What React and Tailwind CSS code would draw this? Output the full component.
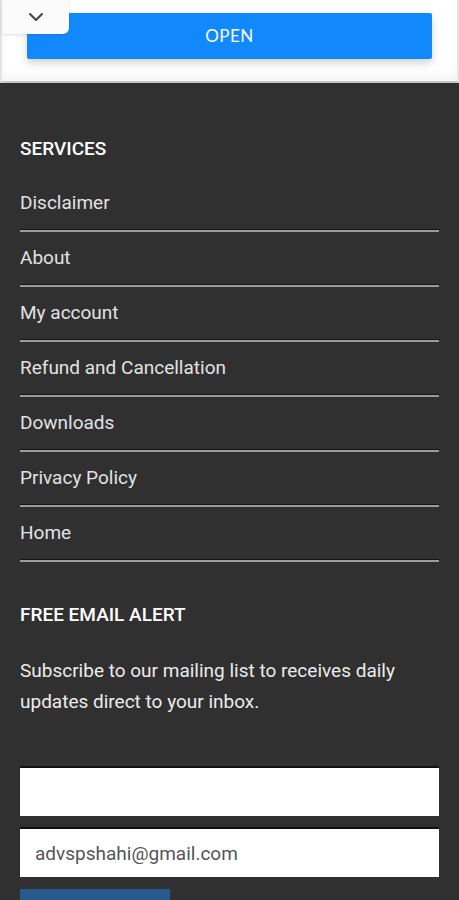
import React from "react";

const services = [
  "Disclaimer",
  "About",
  "My account",
  "Refund and Cancellation",
  "Downloads",
  "Privacy Policy",
  "Home",
];

const App = () => {
  return (
    <div
      className="w-[459px] h-[900px] overflow-hidden bg-[#303030]"
      style={{ fontFamily: "Roboto, 'Liberation Sans', sans-serif" }}
    >
      {/* Top bar with open button */}
      <div className="relative h-[83px] bg-white border-x-2 border-x-[#e4e4e4] border-b-2 border-b-[#c8c8c8] shadow-[inset_0_-6px_8px_rgba(0,0,0,0.04)]">
        <div className="pt-[13px] pl-[25px] pr-[25px]">
          <button
            className="w-full h-[46px] bg-[#1189fd] rounded-[2px] text-white text-[17px] tracking-wide shadow-[0_4px_8px_rgba(0,0,0,0.18)]"
            style={{ fontFamily: "Lato, 'Open Sans', sans-serif" }}
          >
            OPEN
          </button>
        </div>
        <div className="absolute left-0 top-0 w-[67px] h-[34px] bg-[#fbfbfb] rounded-br-[6px] shadow-[0_1px_3px_rgba(0,0,0,0.12)] flex items-center justify-center">
          <svg width="16" height="10" viewBox="0 0 16 10" fill="none">
            <path d="M2 2l6 6 6-6" stroke="#444" strokeWidth="2" strokeLinecap="round" strokeLinejoin="round" />
          </svg>
        </div>
      </div>

      {/* Footer */}
      <div className="px-5 pt-[54px]">
        <h3 className="text-[19px] leading-6 font-medium text-white mb-4">SERVICES</h3>
        <ul>
          {services.map((item) => (
            <li key={item}>
              <div className="h-[53px] flex items-center text-[19px] text-[#e2e2e2]">
                {item}
              </div>
              <div className="h-[2px] bg-[#9b9b9b] shadow-[0_-1px_0_#151515]" />
            </li>
          ))}
        </ul>

        <h3 className="mt-[41px] text-[19px] leading-6 font-medium text-white">
          FREE EMAIL ALERT
        </h3>
        <p className="mt-[28px] text-[19px] leading-[31px] text-[#ececec]">
          Subscribe to our mailing list to receives daily updates direct to your inbox.
        </p>

        <div className="mt-[49px] flex flex-col gap-[11px]">
          <input
            className="w-full h-[50px] bg-white border-t-2 border-t-[#111] outline-none px-4"
            type="text"
          />
          <input
            className="w-full h-[50px] bg-white border-t-2 border-t-[#111] outline-none pl-[15px] text-[19px] text-[#555]"
            type="email"
            defaultValue="advspshahi@gmail.com"
          />
        </div>
        <button aria-label="Subscribe" className="mt-[12px] w-[150px] h-[44px] bg-[#275b8d]" />
      </div>
    </div>
  );
};

export default App;
